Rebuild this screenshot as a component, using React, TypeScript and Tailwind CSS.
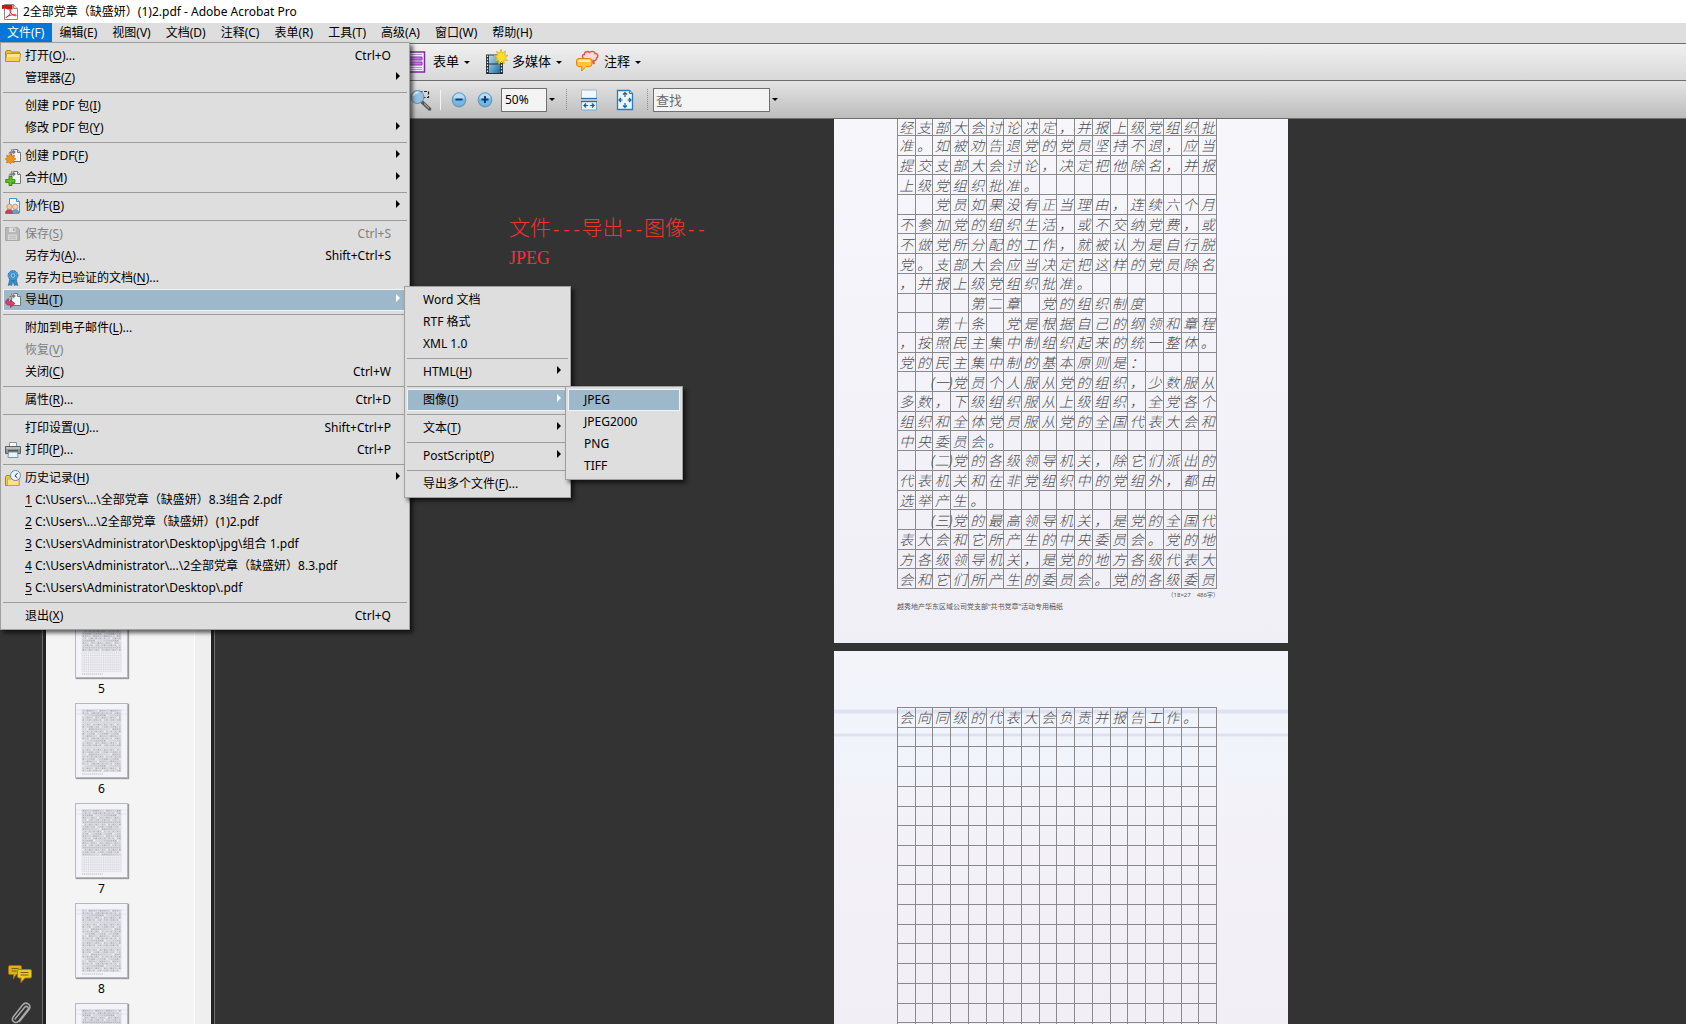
import { ReactNode } from 'react';
import clsx from 'clsx';

type MenuEntry = {
  label?: string; // "&" marks the mnemonic letter
  shortcut?: string;
  icon?: ReactNode;
  disabled?: boolean;
  active?: boolean;
  submenu?: boolean;
  separator?: boolean;
  children?: MenuEntry[];
};

const sep: MenuEntry = { separator: true };

/* ---------- icons ---------- */

function PageShape() {
  return (
    <>
      <path d="M6.5 1.5h6l3 3v9h-9z" fill="#f4f4f4" stroke="#777" />
      <path d="M12.5 1.5v3h3" fill="#d8d8d8" stroke="#777" />
      <path d="M3.5 6.5c0-3 2-3.500 4-3.500V1l3.500 3L7.500 7V5c-1.500 0-2.500.5-4 1.500z" fill="#777" stroke="#ddd" strokeWidth=".5" />
    </>
  );
}

const FolderIcon = (
  <svg viewBox="0 0 16 16" className="h-4 w-4">
    <path d="M.5 13.500V4l1-1.500h4l1 1.500h8v9.500z" fill="#e8c23a" stroke="#b08a1c" />
    <path d="M.5 13.500 1.500 5.500h14l-1 8z" fill="#fbe588" stroke="#b8922a" />
    <path d="M1.500 13 2.300 9h12l-.5 4z" fill="#f4d350" />
  </svg>
);

const CreateIcon = (
  <svg viewBox="0 0 16 16" className="h-4 w-4">
    <PageShape />
    <path d="M5.500 5.500 7 8l2.500-.8L8.900 9.800l2.100 1.200-2.300 1.100.6 2.600-2.600-.7-1.200 2-1.300-2-2.700.8.700-2.700L.1 11l2.200-1.300-.6-2.500 2.500.8z" fill="#f0941e" stroke="#b8660a" strokeWidth=".6" />
  </svg>
);

const CombineIcon = (
  <svg viewBox="0 0 16 16" className="h-4 w-4">
    <PageShape />
    <path d="M4 6.500h3v3h3v3H7v3H4v-3H.7v-3H4z" fill="#5cc41e" stroke="#2a7a08" strokeWidth=".8" />
  </svg>
);

const CollaborateIcon = (
  <svg viewBox="0 0 16 16" className="h-4 w-4">
    <path d="M4.500.5h7l3 3v11h-10z" fill="#eef7fd" stroke="#4a92c8" />
    <path d="M11.500.5v3h3" fill="#b9dcf2" stroke="#4a92c8" />
    <path d="M.5 15.500c0-3 1.500-4 4-4s3.500 1 3.500 4z" fill="#c8405a" stroke="#8a2038" strokeWidth=".5" />
    <path d="M7 15.500c0-3 1.500-4 3.500-4s3.500 1 3.500 4z" fill="#6a9cc4" stroke="#346890" strokeWidth=".5" />
    <circle cx="4.500" cy="8.700" r="2.700" fill="#f0c8a4" stroke="#b07850" strokeWidth=".6" />
    <circle cx="10.300" cy="8.700" r="2.700" fill="#f6d0a8" stroke="#b07850" strokeWidth=".6" />
  </svg>
);

const SaveIcon = (
  <svg viewBox="0 0 16 16" className="h-4 w-4">
    <path d="M.5 1.500h12l2 2v11H.5z" fill="#b8b8b8" stroke="#a8a8a8" />
    <path d="M4 1.500h6.500v4.500H4z" fill="#dedede" />
    <path d="M8 2.500h1.500v2.500H8z" fill="#a8a8a8" />
    <path d="M3 8.500h9v5.500H3z" fill="#d6d6d6" />
    <path d="M4 10.500h7M4 12.500h7" stroke="#bbb" />
  </svg>
);

const RibbonIcon = (
  <svg viewBox="0 0 16 16" className="h-4 w-4">
    <path d="M5 8.500 3.200 15.500l2-.8 1.300 1.100L8 11l1.500 4.800 1.300-1.100 2 .8L11 8.500z" fill="#3a8fc8" stroke="#1c5c8c" strokeWidth=".6" />
    <circle cx="8" cy="5.500" r="4.900" fill="#4ba3dc" stroke="#1c6298" strokeWidth=".8" strokeDasharray="2 .6" />
    <circle cx="8" cy="5.500" r="2.900" fill="#8fd0f4" stroke="#1f6ea8" strokeWidth=".8" />
    <circle cx="8" cy="5.500" r="1.200" fill="#2b80bc" />
  </svg>
);

const ExportIcon = (
  <svg viewBox="0 0 16 16" className="h-4 w-4">
    <PageShape />
    <path d="M3.500 6.500C1 8 0 9.500 1 11.500c.8 1.500 2.500 1.600 4.500 1.600v2.400L10 11.500 5.500 8v2c-1.700 0-2.500-1-2-3.500z" fill="#d8406a" stroke="#902040" strokeWidth=".6" />
  </svg>
);

const PrintIcon = (
  <svg viewBox="0 0 16 16" className="h-4 w-4">
    <path d="M4.500.5h7v5h-7z" fill="#fff" stroke="#7c98a8" />
    <path d="M.5 4.500h15v7H.5z" fill="#8e9498" stroke="#5a6064" />
    <path d="M1 5h14v2H1z" fill="#b8bec2" />
    <path d="M3 8h10v2H3z" fill="#55595d" />
    <path d="M3.500 10h9l.5 5.500H3z" fill="#e8f4fa" stroke="#7898a8" />
  </svg>
);

const HistoryIcon = (
  <svg viewBox="0 0 16 16" className="h-4 w-4">
    <path d="M.5 15.500V7l1-1.500h3L5.500 7h8.500v8.500z" fill="#eccb4a" stroke="#a8841c" />
    <path d="M2.500 15.500V9h11.500v6.500z" fill="#fbe27c" stroke="#c49c2c" strokeWidth=".7" />
    <circle cx="10.500" cy="5.500" r="5" fill="#eef6fc" stroke="#5a88b8" />
    <path d="m12.500 3-2.500 3 2.500 1.800" fill="none" stroke="#333" />
  </svg>
);

function PdfIcon() {
  return (
    <svg viewBox="0 0 16 16" className="h-4 w-4">
      <path d="M2.500.5h9l4 4v11h-13z" fill="#fafafa" stroke="#8a8a8a" />
      <path d="M11.500.5v4h4" fill="#ddd" stroke="#8a8a8a" />
      <path d="M0 1h10.500v4.500H6C5 4.500 2 4.500 0 5z" fill="#c8141c" />
      <path d="M4.500 13.500c3-2 4.500-5 4.300-7.500-.1-1-1.300-.8-1 .4.500 2.800 3 5.300 5.700 5.400 1.200 0 1-1.200-.2-1.200-2.800 0-5.800.8-8.300 1.900-1.200.5-1.200 1.600-.5 1z" fill="none" stroke="#d8202c" strokeWidth=".9" />
    </svg>
  );
}

function FormIcon() {
  return (
    <svg viewBox="0 0 26 22" className="h-[22px] w-[26px]">
      <path d="M1.500 1h20v20h-20z" fill="#f4ecf8" stroke="#7c2a9c" strokeWidth="1.500" />
      <path d="M4 6h15v3H4zM4 11h15v3H4z" fill="#c878e4" stroke="#8a34ac" />
      <path d="M4 3.500h15M4 16.500h15M4 18.500h15" stroke="#a8a0b0" />
    </svg>
  );
}

function MediaIcon() {
  return (
    <svg viewBox="0 0 24 26" className="h-[26px] w-6">
      <defs>
        <linearGradient id="film" x1="0" y1="0" x2="1" y2="1">
          <stop offset="0" stopColor="#b6dcf0" />
          <stop offset="1" stopColor="#1c6ca4" />
        </linearGradient>
      </defs>
      <path d="M2 5.500h17v19.500H2z" fill="#26333c" />
      <path d="M5 6.500h11v8H5zM5 15.500h11v8.500H5z" fill="url(#film)" />
      <path d="M3.500 6.500v18M17.500 6.500v18" stroke="#e8eef2" strokeWidth="1.200" strokeDasharray="1.600 1.400" />
      <path d="m17 0 1.200 4.200L21.500 2l-.9 4 3.400.3-3 2.200 2.600 3-3.800-.5.500 4.100-2.900-2.900-2.600 3.300-.1-4.200-3.900.8 2.600-3-3.400-2.600 4-.5-1.600-3.700 3.500 1.900z" fill="#fbe02a" stroke="#d8a80c" strokeWidth=".7" />
    </svg>
  );
}

function CommentIcon() {
  return (
    <svg viewBox="0 0 24 24" className="h-6 w-6">
      <path d="M8 8.500C5.500 7.500 6 4.500 8.500 4.500 8 1.500 12 .8 13.500 2.500 15.500 .5 19 1.500 19 3.500c3-.3 3.800 3.500 1.500 4.500.3 2-1.500 3-3 2.500l.8 3.500-3.300-4C13 11.500 8.500 11 8 8.500z" fill="#f0dcd8" stroke="#e0584c" strokeWidth="1.400" />
      <path d="M3 8.500h10.500Q16 8.500 16 11v3q0 2.500-2.500 2.500H10l-4.500 4.500.5-4.500H3Q.5 16.500.5 14v-3Q.5 8.500 3 8.500z" fill="#fcc63a" stroke="#d8880c" />
      <path d="M3.500 9.700h9.500q1.500.3 1.500 2.300H2q0-2 1.500-2.300z" fill="#fff0a8" />
    </svg>
  );
}

function MarqueeZoomIcon() {
  return (
    <svg viewBox="0 0 22 22" className="h-[22px] w-[22px]">
      <path d="M9.500 2.500h9v6h-6" fill="none" stroke="#222" strokeWidth="1.200" strokeDasharray="3 1.500" />
      <path d="m12 13 7.500 7" stroke="#555" strokeWidth="3.400" strokeLinecap="round" />
      <path d="m14 14.500 5 4.800" stroke="#ccc" strokeWidth="1" />
      <circle cx="7.500" cy="8" r="6.500" fill="#8cc0e4" fillOpacity=".85" stroke="#5a92bc" />
      <path d="M3.500 7a4 4 0 0 1 5-3.500" fill="none" stroke="#e4f4ff" strokeWidth="1.600" />
    </svg>
  );
}

function RoundIcon({ plus = false }: { plus?: boolean }) {
  return (
    <svg viewBox="0 0 16 16" className="h-4 w-4">
      <circle cx="8" cy="8.500" r="7.200" fill="#8aa4b8" />
      <circle cx="8" cy="7.500" r="6.800" fill="#74b8e4" stroke="#5a94bc" strokeWidth=".8" />
      <path d="M2.500 6.500a5.500 5 0 0 1 11 0z" fill="#b4dcf4" />
      <path d={plus ? 'M4.500 7.500h7M8 4v7' : 'M4.500 7.500h7'} stroke="#103c6c" strokeWidth="1.900" />
    </svg>
  );
}

function FitWidthIcon() {
  return (
    <svg viewBox="0 0 18 22" className="h-[22px] w-[18px]">
      <path d="M1.500 1h15v8.500h-15z" fill="#f2f9fe" stroke="#9abcd4" />
      <path d="M1 9.500h16" stroke="#2a6ea4" strokeWidth="1.300" />
      <path d="M1.500 12.500h15v8.500h-15z" fill="#e4f2fb" stroke="#7aaacc" />
      <path d="M1 12.500h16" stroke="#2a6ea4" strokeWidth="1.300" />
      <path d="M4 16.500h4M10 16.500h4M6 14.500l-2 2 2 2M12 14.500l2 2-2 2" fill="none" stroke="#1c5c94" strokeWidth="1.200" />
    </svg>
  );
}

function FitPageIcon() {
  return (
    <svg viewBox="0 0 18 22" className="h-[22px] w-[18px]">
      <path d="M1.500 1.500h12l3 3v16h-15z" fill="#eaf6fd" stroke="#2f7cb4" strokeWidth="1.300" />
      <path d="M13.500 1.500v3h3" fill="#b4d8ee" stroke="#2f7cb4" />
      <path d="M9 3.500V8M9 14v4.500M3 11h3.500M11.500 11H15M7 5.500l2-2 2 2M7 16.500l2 2 2-2M5 9l-2 2 2 2M13 9l2 2-2 2" fill="none" stroke="#1c5c94" strokeWidth="1.200" />
    </svg>
  );
}

function BubblesIcon() {
  return (
    <svg viewBox="0 0 24 20" className="h-5 w-6">
      <path d="M2 1.500h10q1.500 0 1.500 1.500v6q0 1.500-1.500 1.500H8l-2.500 4v-4H2Q.5 10.500.5 9V3Q.5 1.500 2 1.500z" fill="#d8b41c" stroke="#a86c0c" />
      <path d="M3.500 4.500h7M3.500 7h5" stroke="#7c5c08" />
      <path d="M11 5.500h11q1.500 0 1.500 1.500v5.500q0 1.500-1.500 1.500h-5l-4 4.500V14h-2q-1.500 0-1.500-1.500V7q0-1.500 1.500-1.500z" fill="#ecc828" stroke="#b8740c" />
      <path d="M12.500 8.500h8M12.500 11h8" stroke="#7c5c08" />
    </svg>
  );
}

function ClipIcon() {
  return (
    <svg viewBox="0 0 24 24" className="h-6 w-6">
      <path d="m7 19 9.500-11.500c2-2.500 5-.2 3.200 2.300l-9 11.200c-3 3.500-8.200 0-5.500-4L14.500 5c3.500-4.200 9.500 0 6.500 4.500l-9.500 12" fill="none" stroke="#a8a8a8" strokeWidth="1.500" strokeLinecap="round" />
    </svg>
  );
}

/* ---------- menus ---------- */

const imageMenu: MenuEntry[] = [
  { label: 'JPEG', active: true },
  { label: 'JPEG2000' },
  { label: 'PNG' },
  { label: 'TIFF' }
];

const exportMenu: MenuEntry[] = [
  { label: 'Word 文档' },
  { label: 'RTF 格式' },
  { label: 'XML 1.0' },
  sep,
  { label: 'HTML(&H)', submenu: true },
  sep,
  { label: '图像(&I)', submenu: true, active: true, children: imageMenu },
  sep,
  { label: '文本(&T)', submenu: true },
  sep,
  { label: 'PostScript(&P)', submenu: true },
  sep,
  { label: '导出多个文件(&F)...' }
];

const fileMenu: MenuEntry[] = [
  { label: '打开(&O)...', shortcut: 'Ctrl+O', icon: FolderIcon },
  { label: '管理器(&Z)', submenu: true },
  sep,
  { label: '创建 PDF 包(&I)' },
  { label: '修改 PDF 包(&Y)', submenu: true },
  sep,
  { label: '创建 PDF(&F)', submenu: true, icon: CreateIcon },
  { label: '合并(&M)', submenu: true, icon: CombineIcon },
  sep,
  { label: '协作(&B)', submenu: true, icon: CollaborateIcon },
  sep,
  { label: '保存(&S)', shortcut: 'Ctrl+S', icon: SaveIcon, disabled: true },
  { label: '另存为(&A)...', shortcut: 'Shift+Ctrl+S' },
  { label: '另存为已验证的文档(&N)...', icon: RibbonIcon },
  { label: '导出(&T)', submenu: true, icon: ExportIcon, active: true, children: exportMenu },
  sep,
  { label: '附加到电子邮件(&L)...' },
  { label: '恢复(&V)', disabled: true },
  { label: '关闭(&C)', shortcut: 'Ctrl+W' },
  sep,
  { label: '属性(&R)...', shortcut: 'Ctrl+D' },
  sep,
  { label: '打印设置(&U)...', shortcut: 'Shift+Ctrl+P' },
  { label: '打印(&P)...', shortcut: 'Ctrl+P', icon: PrintIcon },
  sep,
  { label: '历史记录(&H)', submenu: true, icon: HistoryIcon },
  { label: '&1 C:\\Users\\...\\全部党章（缺盛妍）8.3组合 2.pdf' },
  { label: '&2 C:\\Users\\...\\2全部党章（缺盛妍）(1)2.pdf' },
  { label: '&3 C:\\Users\\Administrator\\Desktop\\jpg\\组合 1.pdf' },
  { label: '&4 C:\\Users\\Administrator\\...\\2全部党章（缺盛妍）8.3.pdf' },
  { label: '&5 C:\\Users\\Administrator\\Desktop\\.pdf' },
  sep,
  { label: '退出(&X)', shortcut: 'Ctrl+Q' }
];

function Mnemonic({ text }: { text: string }) {
  const at = text.indexOf('&');
  if (at < 0) return <span>{text}</span>;
  return (
    <span>
      {text.slice(0, at)}
      <u className="underline-offset-2">{text[at + 1]}</u>
      {text.slice(at + 2)}
    </span>
  );
}

function Menu({ items, className, icons = false }: { items: MenuEntry[]; className?: string; icons?: boolean }) {
  return (
    <ul
      role="menu"
      className={clsx(
        'absolute z-20 border border-[#a0a0a0] bg-[#dedede] p-0.5 text-xs text-black shadow-[3px_3px_4px_rgba(0,0,0,0.6)]',
        className
      )}
    >
      {items.map((item, i) =>
        item.separator ? (
          <li key={i} role="separator" className="flex h-1.5 items-center">
            <span className="h-px w-full bg-[#9c9c9c]" />
          </li>
        ) : (
          <li key={i} role="none" className="relative">
            <button
              type="button"
              role="menuitem"
              disabled={item.disabled}
              className={clsx(
                'flex h-[22px] w-full items-center whitespace-nowrap border text-left',
                item.active ? 'border-[#eef4f8] bg-[#9db7cb]' : 'border-transparent',
                item.disabled && 'text-[#808080]',
                icons ? 'gap-1 pl-px' : 'pl-[15px]'
              )}
            >
              {icons && <span className="h-4 w-4 shrink-0">{item.icon}</span>}
              <Mnemonic text={item.label ?? ''} />
              {item.shortcut && <span className="ml-auto pr-[15px]">{item.shortcut}</span>}
              {item.submenu && (
                <svg viewBox="0 0 4 8" className={clsx('mr-1.5 mb-1 ml-auto h-2 w-1', item.active ? 'fill-white' : 'fill-black')}>
                  <path d="M0 0 4 4 0 8z" />
                </svg>
              )}
            </button>
            {item.children && (
              <Menu
                items={item.children}
                className={clsx('-top-[3px] left-[calc(100%-3px)]', item.children === exportMenu ? 'w-[167px]' : 'w-[118px]')}
              />
            )}
          </li>
        )
      )}
    </ul>
  );
}

const menuBar = ['文件(F)', '编辑(E)', '视图(V)', '文档(D)', '注释(C)', '表单(R)', '工具(T)', '高级(A)', '窗口(W)', '帮助(H)'];

function MenuBar() {
  return (
    <nav className="relative flex h-5 items-start bg-[#dedede] text-xs">
      {menuBar.map((label, i) => (
        <button
          key={label}
          type="button"
          className={clsx('h-[19px] pr-2 pl-[7px] leading-4', i === 0 ? 'bg-[#0078d7] text-white' : 'text-black')}
        >
          {label}
        </button>
      ))}
      <Menu items={fileMenu} icons className="top-[19px] left-0 w-[410px]" />
    </nav>
  );
}

/* ---------- toolbars ---------- */

function DownArrow() {
  return (
    <svg viewBox="0 0 6 3" className="h-[3px] w-1.5 fill-black">
      <path d="M0 0h6L3 3z" />
    </svg>
  );
}

function Grip() {
  return <span className="h-[22px] w-[3px] bg-[repeating-conic-gradient(#8c8c8c_0_25%,transparent_0_100%)] bg-[length:2px_2px]" />;
}

function TaskButton({ icon, label }: { icon: ReactNode; label: string }) {
  return (
    <button type="button" className="flex items-center text-[13px]">
      {icon}
      <span className="mr-[5px] ml-1">{label}</span>
      <DownArrow />
    </button>
  );
}

function Toolbars() {
  return (
    <div className="text-black">
      <div className="flex h-[37px] items-center gap-3.5 border-t border-[#6e6e6e] bg-linear-to-b from-[#f0f0f0] to-[#d8d8d8] pl-[403px]">
        <TaskButton icon={<FormIcon />} label="表单" />
        <TaskButton icon={<MediaIcon />} label="多媒体" />
        <TaskButton icon={<CommentIcon />} label="注释" />
      </div>
      <div className="flex h-[39px] items-center border-y border-[#6e6e6e] bg-linear-to-b from-[#e4e4e4] to-[#bcbcbc] pl-[410px]">
        <button type="button" aria-label="选框缩放">
          <MarqueeZoomIcon />
        </button>
        <span className="mr-2.5 ml-2 h-5 w-px bg-[#f4f4f4]" />
        <button type="button" aria-label="缩小" className="mr-2.5">
          <RoundIcon />
        </button>
        <button type="button" aria-label="放大" className="mr-2">
          <RoundIcon plus />
        </button>
        <input aria-label="缩放比例" defaultValue="50%" className="mr-0.5 h-6 w-[46px] border border-[#707070] bg-[#f4f4f4] px-[3px] text-xs" />
        <DownArrow />
        <span className="ml-2.5 flex items-center gap-3">
          <Grip />
          <button type="button" aria-label="适合宽度" className="mr-1.5">
            <FitWidthIcon />
          </button>
          <button type="button" aria-label="适合页面">
            <FitPageIcon />
          </button>
          <Grip />
        </span>
        <input
          aria-label="查找"
          placeholder="查找"
          className="mr-0.5 ml-1 h-6 w-[117px] border border-[#707070] bg-[#f4f4f4] px-0.5 text-[13px] placeholder:text-[#6c6c6c]"
        />
        <DownArrow />
      </div>
    </div>
  );
}

/* ---------- thumbnails ---------- */

const thumbs = [
  { page: 5, filled: 18 },
  { page: 6, filled: 27 },
  { page: 7, filled: 20 },
  { page: 8, filled: 27 },
  { page: 9, filled: 27 }
];

function Thumbnail({ page, filled }: { page: number; filled: number }) {
  const marks = [];
  for (let r = 0; r < filled; r++) {
    for (let c = 0; c < 18; c++) {
      const noise = (r * 37 + c * 53 + page * 17 + r * c * 7) % 11;
      marks.push(
        <rect key={`${r}-${c}`} x={6.5 + c * 2.15} y={6 + r * 2.3} width="1.5" height="1.5" fill="#5c6068" opacity={noise < 1 ? 0 : 0.12 + noise * 0.035} />
      );
    }
  }
  return (
    <figure className="flex h-[100px] flex-col items-center">
      <svg viewBox="0 0 51 73" className="h-[75px] w-[53px] border border-[#b8b8bc] bg-[#f3f3f9] shadow-[1px_1px_1px_#999]">
        <path d="M0 6h51M0 10h51" stroke="#e2e6f2" />
        {Array.from({ length: 28 }, (_, i) => (
          <path key={i} d={`M6 ${5.5 + i * 2.3}h39`} stroke="#c4c4cc" strokeWidth=".35" />
        ))}
        {Array.from({ length: 19 }, (_, i) => (
          <path key={i} d={`M${6 + i * 2.16} 5.500v62`} stroke="#c4c4cc" strokeWidth=".35" />
        ))}
        {marks}
        <path d="M6 70h21" stroke="#b4b4bc" strokeWidth=".8" strokeDasharray="1.500 .5" />
      </svg>
      <figcaption className="mt-[3px] text-xs leading-4 text-black">{page}</figcaption>
    </figure>
  );
}

function Sidebar() {
  return (
    <aside className="flex shrink-0">
      <div className="flex w-[42px] flex-col items-start justify-end gap-4 overflow-hidden pl-2">
        <button type="button" aria-label="注释">
          <BubblesIcon />
        </button>
        <button type="button" aria-label="附件">
          <ClipIcon />
        </button>
      </div>
      <div className="w-[173px] overflow-hidden border-x border-[#6c6c6c]">
        <div className="flex h-full border-x-[3px] border-[#222] bg-[#f4f4f4]">
          <div className="w-[111px] overflow-hidden pt-[484px]">
            {thumbs.map((t) => (
              <Thumbnail key={t.page} {...t} />
            ))}
          </div>
          <div className="ml-auto w-[17px] border-l border-white bg-[#efefef]" />
        </div>
      </div>
    </aside>
  );
}

/* ---------- document ---------- */

const pageOne = [
  '经支部大会讨论决定，并报上级党组织批',
  '准。如被劝告退党的党员坚持不退，应当',
  '提交支部大会讨论，决定把他除名，并报',
  '上级党组织批准。',
  '　　党员如果没有正当理由，连续六个月',
  '不参加党的组织生活，或不交纳党费，或',
  '不做党所分配的工作，就被认为是自行脱',
  '党。支部大会应当决定把这样的党员除名',
  '，并报上级党组织批准。',
  '　　　　第二章　党的组织制度',
  '　　第十条　党是根据自己的纲领和章程',
  '，按照民主集中制组织起来的统一整体。',
  '党的民主集中制的基本原则是：',
  '　　㈠党员个人服从党的组织，少数服从',
  '多数，下级组织服从上级组织，全党各个',
  '组织和全体党员服从党的全国代表大会和',
  '中央委员会。',
  '　　㈡党的各级领导机关，除它们派出的',
  '代表机关和在非党组织中的党组外，都由',
  '选举产生。',
  '　　㈢党的最高领导机关，是党的全国代',
  '表大会和它所产生的中央委员会。党的地',
  '方各级领导机关，是党的地方各级代表大',
  '会和它们所产生的委员会。党的各级委员'
];

const pageTwo = ['会向同级的代表大会负责并报告工作。'];

// numbered clauses are written as "(一)" and spill out of their cell
const clause: Record<string, string> = { '㈠': '(一)', '㈡': '(二)', '㈢': '(三)' };

function Manuscript({ lines, rows, className }: { lines: string[]; rows: number; className: string }) {
  return (
    <div
      className={clsx(
        'grid auto-rows-fr grid-cols-[repeat(18,minmax(0,1fr))] border-l border-[#8a8a8e] text-sm font-light text-[#4c4c50] italic',
        className
      )}
    >
      {Array.from({ length: rows * 18 }, (_, i) => {
        const ch = (lines[Math.floor(i / 18)] ?? '')[i % 18] ?? '';
        return (
          <span key={i} className="flex min-h-0 items-center justify-center border-r border-b border-[#8a8a8e] pt-0.5 leading-none whitespace-nowrap">
            {clause[ch] ?? ch}
          </span>
        );
      })}
    </div>
  );
}

function DocumentArea() {
  return (
    <main className="relative min-w-0 flex-1 overflow-hidden bg-[#333]">
      <div className="ml-[619px] flex w-[454px] flex-col gap-2">
        <article className="h-[524px] bg-linear-to-b from-[#f6f6fb] to-[#f1eff6] px-[63px]">
          <Manuscript lines={pageOne} rows={24} className="h-[470px] w-80 grid-rows-[17px]" />
          <p className="mt-0.5 pr-1.5 text-right text-[6px] leading-2 text-[#555]">（18×27　486字）</p>
          <p className="mt-1 text-[7px] leading-2 text-[#555]">越秀地产华东区域公司党支部“共书党章”活动专用稿纸</p>
        </article>
        <article className="h-[524px] bg-[linear-gradient(#f3f4fa_0,#f2f4fb_58px,#dfe3f1_59px,#dfe3f1_62px,#f2f4fb_63px,#f2f5fb_82px,#e0e1f0_83px,#e0e1f0_85px,#f0f4fa_86px,#f1f4fa_120px,#f3f2f8_140px,#f1eff5_373px)] px-[63px] pt-14">
          <Manuscript lines={pageTwo} rows={17} className="h-[336px] w-80 border-t" />
        </article>
      </div>
      <p className="absolute top-24 left-[294px] font-['Liberation_Serif','Noto_Sans_CJK_SC',serif] text-[21px] leading-[26px] font-light text-[#f03434]">
        文件<Dashes n={3} />导出<Dashes n={2} />图像<Dashes n={2} />
        <br />
        <span className="text-lg leading-[26px]">JPEG</span>
      </p>
    </main>
  );
}

function Dashes({ n }: { n: number }) {
  return <span className="font-['Liberation_Mono',monospace] text-[17px]">{'-'.repeat(n)}</span>;
}

export default function App() {
  return (
    <div className="flex h-screen flex-col overflow-hidden bg-[#333] font-['Noto_Sans','Noto_Sans_CJK_SC',sans-serif]">
      <header className="relative z-10 shrink-0">
        <div className="flex h-[23px] items-center gap-[5px] bg-white pl-0.5 text-xs text-black">
          <PdfIcon />
          <h1>2全部党章（缺盛妍）(1)2.pdf - Adobe Acrobat Pro</h1>
        </div>
        <MenuBar />
        <Toolbars />
      </header>
      <div className="flex min-h-0 flex-1">
        <Sidebar />
        <DocumentArea />
      </div>
    </div>
  );
}
